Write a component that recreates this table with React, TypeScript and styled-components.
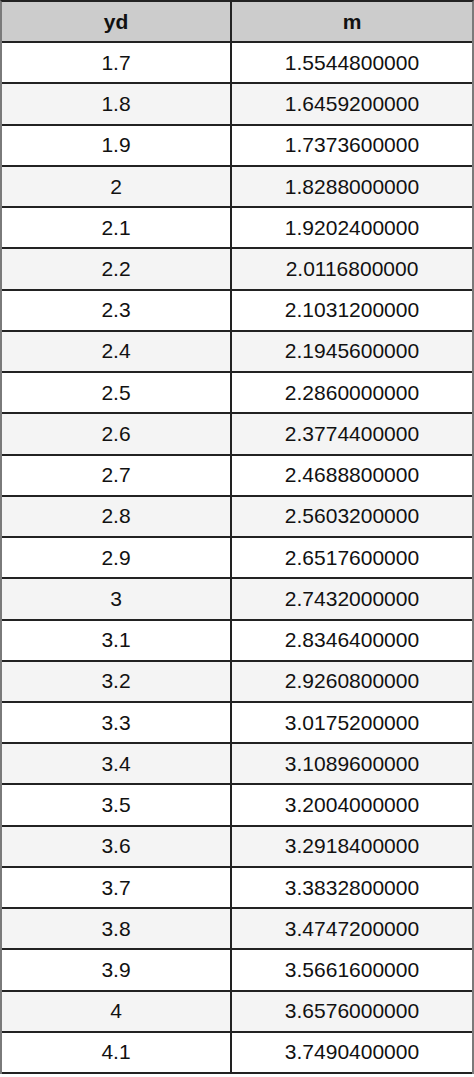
import styled, { createGlobalStyle } from "styled-components";

const GlobalStyle = createGlobalStyle`
    html, body {
        margin: 0;
        padding: 0;
        background-color: #ffffff;
    }
`;

const rows = Array.from({ length: 25 }, (_, i) => {
    const tenths = 17 + i;
    return {
        yd: String(tenths / 10),
        m: ((tenths * 9144) / 100000).toFixed(10),
    };
});

export default function App() {
    return (
        <>
            <GlobalStyle />
            <Table>
                <Row $kind="head">
                    <Cell $first $bold>yd</Cell>
                    <Cell $bold>m</Cell>
                </Row>
                {rows.map((row, i) => (
                    <Row key={row.yd} $kind={i % 2 === 1 ? "alt" : "plain"}>
                        <Cell $first>{row.yd}</Cell>
                        <Cell>{row.m}</Cell>
                    </Row>
                ))}
            </Table>
        </>
    );
}

const Table = styled.div`
    box-sizing: border-box;
    width: 474px;
    display: flex;
    flex-direction: column;
    border-top: 2px solid #222222;
    border-left: 2px solid #7a7a7a;
    border-right: 2px solid #7a7a7a;
    font-family: "Liberation Sans", Arial, sans-serif;
    font-size: 21px;
    color: #111111;
`;

const rowColors = {
    head: "#cccccc",
    alt: "#f4f4f4",
    plain: "#ffffff",
};

const Row = styled.div<{ $kind: keyof typeof rowColors }>`
    box-sizing: border-box;
    height: 41.24px;
    display: grid;
    grid-template-columns: 230px 1fr;
    border-bottom: 2px solid #222222;
    background-color: ${(p) => rowColors[p.$kind]};
`;

const Cell = styled.div<{ $first?: boolean; $bold?: boolean }>`
    display: flex;
    align-items: center;
    justify-content: center;
    font-weight: ${(p) => (p.$bold ? 700 : 400)};
    border-right: ${(p) => (p.$first ? "2px solid #222222" : "none")};
`;
